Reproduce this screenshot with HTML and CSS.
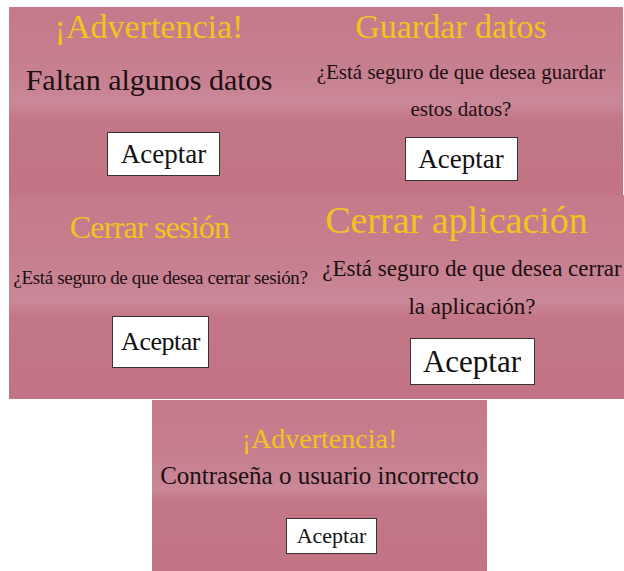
FILE: index.html
```html
<html>

<head>
  <title>Mensajes</title>
  <meta name="viewport" content="width=device-width, initial-scale=1">
  <link rel="stylesheet" href="styles.css">
</head>

<body>
  <div class="sheet">
    <div class="row">
      <div class="panel faltan">
        <h2 class="title">¡Advertencia!</h2>
        <p class="msg">Faltan algunos datos</p>
        <button class="ok">Aceptar</button>
      </div>
      <div class="panel guardar">
        <h2 class="title">Guardar datos</h2>
        <p class="msg">¿Está seguro de que desea guardar estos datos?</p>
        <button class="ok">Aceptar</button>
      </div>
    </div>
    <div class="row">
      <div class="panel sesion">
        <h2 class="title">Cerrar sesión</h2>
        <p class="msg">¿Está seguro de que desea cerrar sesión?</p>
        <button class="ok">Aceptar</button>
      </div>
      <div class="panel salir">
        <h2 class="title">Cerrar aplicación</h2>
        <p class="msg">¿Está seguro de que desea cerrar la aplicación?</p>
        <button class="ok">Aceptar</button>
      </div>
    </div>
    <div class="panel login">
      <h2 class="title">¡Advertencia!</h2>
      <p class="msg">Contraseña o usuario incorrecto</p>
      <button class="ok">Aceptar</button>
    </div>
  </div>
</body>

</html>
```

FILE: styles.css
```css
body {
  margin: 0;
  background-color: white;
  font-family: "Liberation Serif", "Times New Roman", serif;
}

.sheet {
  width: 624px;
  height: 571px;
  padding-top: 7px;
  box-sizing: border-box;
  display: flex;
  flex-direction: column;
}

.row {
  display: flex;
  margin-left: 9px;
}

.panel {
  display: flex;
  flex-direction: column;
  align-items: center;
  text-align: center;
  box-sizing: border-box;
  background: linear-gradient(#c47a8b 0%, #c7808f 35%, #ca8898 52%, #c27686 60%, #c27484 100%);
}

.title {
  margin: 0;
  font-weight: normal;
  color: #f6c21c;
}

.msg {
  margin: 0;
  color: #1c0f12;
}

.ok {
  display: flex;
  align-items: center;
  justify-content: center;
  padding: 0;
  background-color: white;
  border: 1px solid #3a3336;
  color: #111;
  font-family: inherit;
}

/* faltan algunos datos */
.faltan {
  width: 290px;
  height: 188px;
  padding-right: 10px;
}

.faltan .title {
  font-size: 34px;
  line-height: 40px;
}

.faltan .msg {
  margin-top: 15px;
  font-size: 30px;
  line-height: 36px;
}

.faltan .ok {
  margin-top: 34px;
  margin-left: 29px;
  width: 113px;
  height: 44px;
  font-size: 27px;
}

/* guardar datos */
.guardar {
  width: 324px;
  height: 188px;
}

.guardar .title {
  margin-right: 20px;
  font-size: 34px;
  line-height: 40px;
}

.guardar .msg {
  margin-top: 7px;
  max-width: 300px;
  font-size: 21px;
  line-height: 37px;
}

.guardar .ok {
  margin-top: 9px;
  width: 113px;
  height: 44px;
  font-size: 27px;
}

/* cerrar sesion */
.sesion {
  width: 303px;
  height: 204px;
  padding-top: 12px;
}

.sesion .title {
  margin-right: 22px;
  font-size: 32px;
  line-height: 40px;
  letter-spacing: -0.8px;
}

.sesion .msg {
  margin-top: 16px;
  font-size: 19px;
  line-height: 30px;
  letter-spacing: -0.35px;
  white-space: nowrap;
}

.sesion .ok {
  margin-top: 23px;
  width: 97px;
  height: 52px;
  font-size: 26px;
  letter-spacing: -0.5px;
}

/* cerrar aplicacion */
.salir {
  width: 312px;
  height: 204px;
  padding-top: 3px;
}

.salir .title {
  margin-right: 23px;
  font-size: 38px;
  line-height: 44px;
}

.salir .msg {
  margin-top: 8px;
  margin-left: 8px;
  max-width: 306px;
  font-size: 23px;
  line-height: 38px;
}

.salir .ok {
  margin-top: 12px;
  margin-left: 8px;
  width: 125px;
  height: 47px;
  font-size: 31px;
}

/* contrasena incorrecta */
.login {
  width: 335px;
  height: 171px;
  margin-top: 1px;
  margin-left: 152px;
  padding-top: 22px;
}

.login .title {
  font-size: 28px;
  line-height: 34px;
}

.login .msg {
  margin-top: 4px;
  font-size: 25px;
  line-height: 32px;
}

.login .ok {
  margin-top: 26px;
  margin-left: 24px;
  width: 91px;
  height: 36px;
  font-size: 22px;
}
```
